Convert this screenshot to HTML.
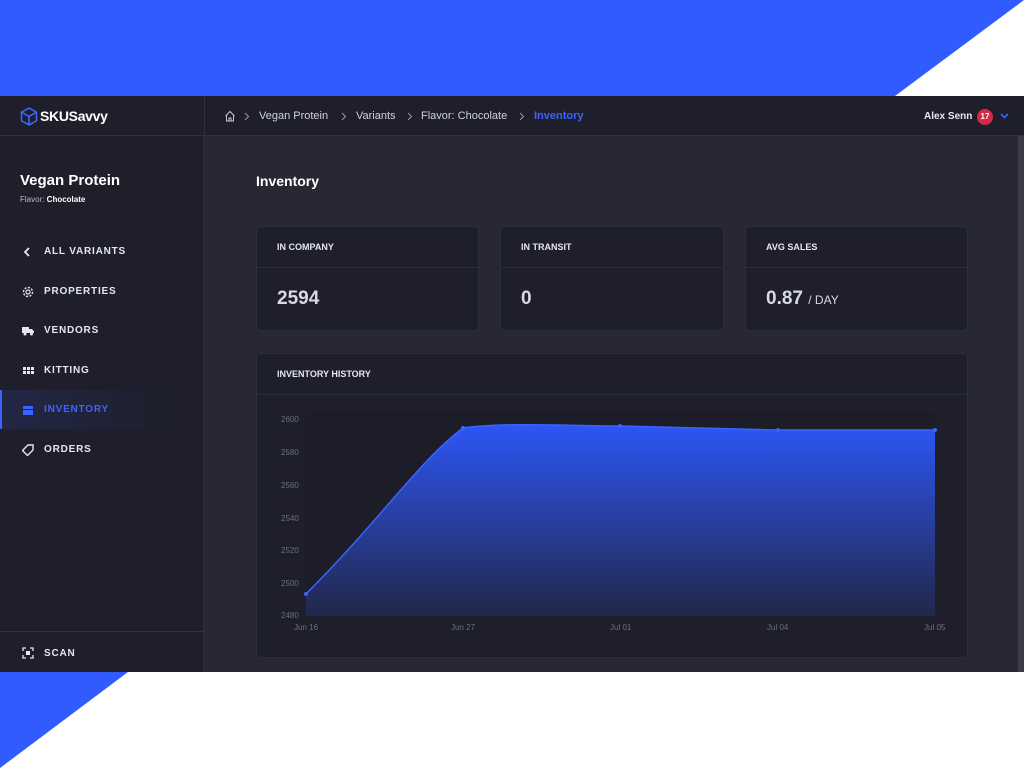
<!DOCTYPE html>
<html><head><style>
*{margin:0;padding:0;box-sizing:border-box}
body{width:1024px;height:768px;background:#fff;position:relative;overflow:hidden;font-family:"Liberation Sans",sans-serif}
.abs{position:absolute}
.app{position:absolute;left:0;top:96px;width:1024px;height:576px;background:#272834}
.top{position:absolute;left:0;top:0;width:1024px;height:40px;background:#1e1f2b;border-bottom:1px solid #30313d}
.side{position:absolute;left:0;top:40px;width:204px;height:536px;background:#1e1f2b;border-right:1px solid #30313d}
.nav{position:absolute;left:44px;font-size:10px;font-weight:bold;color:#e6e7ee;letter-spacing:.8px}
.ico{position:absolute;left:22px;width:12px;height:10px}
.card{position:absolute;background:#1e1f2b;border:1px solid #2c2d3a;border-radius:4px}
.ch{height:41px;border-bottom:1px solid #2c2d3a;padding:15px 20px 0;font-size:9px;font-weight:bold;color:#e6e7ee}
.val{padding:20px 20px;font-size:19px;font-weight:bold;color:#d8d9e2}
.bc{position:absolute;top:14px;font-size:11px;color:#d0d1da}
.sep{position:absolute;top:16px}
.ax{position:absolute;font-size:8px;color:#6e6f7c}
</style></head><body>
<div class="abs" style="left:0;top:0;width:1024px;height:96px;background:#2f5bff"></div>
<svg class="abs" style="left:0;top:0" width="1024" height="768"><polygon points="895,96 1024,0 1024,96" fill="#fff"/><polygon points="0,672 128,672 0,768" fill="#2f5bff"/></svg>
<div class="app">
<div class="top">
 <svg class="abs" style="left:20px;top:11px" width="18" height="19" viewBox="0 0 18 19"><path d="M9 1L16.5 5.2V13.8L9 18 1.5 13.8V5.2Z M1.5 5.2L9 9.5 16.5 5.2 M9 9.5V18" fill="none" stroke="#3d63ff" stroke-width="1.6"/></svg>
 <div class="abs" style="left:40px;top:12px;font-size:14px;font-weight:bold;color:#fff;letter-spacing:-.3px">SKUSavvy</div>
 <div class="abs" style="left:204px;top:0;width:1px;height:40px;background:#30313d"></div>
 <svg class="abs" style="left:224px;top:14px" width="12" height="12" viewBox="0 0 12 12"><path d="M1.5 6L6 1.5 10.5 6M2.5 5V11H9.5V5M5 11V8H7V11" fill="none" stroke="#c8c9d2" stroke-width="1"/></svg>
 <svg class="sep" style="left:244px" width="6" height="9"><path d="M1 1L4.5 4.5 1 8" fill="none" stroke="#999" stroke-width="1"/></svg>
 <div class="bc" style="left:259px">Vegan Protein</div>
 <svg class="sep" style="left:341px" width="6" height="9"><path d="M1 1L4.5 4.5 1 8" fill="none" stroke="#999" stroke-width="1"/></svg>
 <div class="bc" style="left:356px">Variants</div>
 <svg class="sep" style="left:407px" width="6" height="9"><path d="M1 1L4.5 4.5 1 8" fill="none" stroke="#999" stroke-width="1"/></svg>
 <div class="bc" style="left:421px">Flavor: Chocolate</div>
 <svg class="sep" style="left:519px" width="6" height="9"><path d="M1 1L4.5 4.5 1 8" fill="none" stroke="#999" stroke-width="1"/></svg>
 <div class="bc" style="left:534px;color:#3d63ff;font-weight:bold">Inventory</div>
 <div class="abs" style="left:924px;top:15px;font-size:10px;font-weight:bold;color:#e6e7ee">Alex Senn</div>
 <div class="abs" style="left:977px;top:13px;width:16px;height:16px;border-radius:8px;background:#d42a4a;color:#fff;font-size:8px;font-weight:bold;text-align:center;line-height:16px">17</div>
 <svg class="abs" style="left:1000px;top:17px" width="9" height="6"><path d="M1 1L4.5 4.5 8 1" fill="none" stroke="#3d63ff" stroke-width="1.6"/></svg>
</div>
<div class="abs" style="left:1018px;top:40px;width:6px;height:536px;background:#3a3b47"></div>
<div class="side">
 <div class="abs" style="left:20px;top:36px;font-size:15px;font-weight:bold;color:#fff">Vegan Protein</div>
 <div class="abs" style="left:20px;top:59px;font-size:8px;color:#bbb">Flavor: <b style="color:#fff">Chocolate</b></div>
 <svg class="ico" style="top:111px"><path d="M7 1L3 5 7 9" fill="none" stroke="#e6e7ee" stroke-width="1.8"/></svg>
 <div class="nav" style="top:110px">ALL VARIANTS</div>
 <svg class="ico" style="top:150px;height:12px" viewBox="0 0 12 12"><circle cx="6" cy="6" r="2" fill="none" stroke="#e6e7ee" stroke-width="1.2"/><circle cx="6" cy="6" r="4.5" fill="none" stroke="#e6e7ee" stroke-width="1.4" stroke-dasharray="2 1.5"/></svg>
 <div class="nav" style="top:150px">PROPERTIES</div>
 <svg class="ico" style="top:190px" viewBox="0 0 12 10"><path d="M0 1H7V7H0Z M7 3H10L12 5.5V7H7Z" fill="#e6e7ee"/><circle cx="3" cy="8" r="1.5" fill="#e6e7ee"/><circle cx="9.5" cy="8" r="1.5" fill="#e6e7ee"/></svg>
 <div class="nav" style="top:189px">VENDORS</div>
 <svg class="ico" style="top:230px" viewBox="0 0 12 10"><path d="M1 1h3v3H1zM5 1h3v3H5zM9 1h3v3H9zM1 5h3v3H1zM5 5h3v3H5zM9 5h3v3H9z" fill="#e6e7ee"/></svg>
 <div class="nav" style="top:229px">KITTING</div>
 <div class="abs" style="left:0;top:254px;width:170px;height:39px;background:linear-gradient(90deg,#222747,#1e1f2b)"></div>
 <div class="abs" style="left:0;top:254px;width:2px;height:39px;background:#3d63ff"></div>
 <svg class="ico" style="top:269px" viewBox="0 0 12 10"><path d="M1 1H11V4H1ZM1 5H11V10H1Z" fill="#3d63ff"/></svg>
 <div class="nav" style="top:268px;color:#3d63ff">INVENTORY</div>
 <svg class="ico" style="top:308px;height:12px" viewBox="0 0 12 12"><path d="M6 1H11V6L5.5 11.5 0.5 6.5Z" fill="none" stroke="#e6e7ee" stroke-width="1.4"/></svg>
 <div class="nav" style="top:308px">ORDERS</div>
 <div class="abs" style="left:0;top:495px;width:204px;height:1px;background:#30313d"></div>
 <svg class="ico" style="top:511px;height:12px" viewBox="0 0 12 12"><path d="M1 4V1H4M8 1H11V4M11 8V11H8M4 11H1V8" fill="none" stroke="#e6e7ee" stroke-width="1.3"/><rect x="4" y="4" width="4" height="4" fill="#e6e7ee"/></svg>
 <div class="nav" style="top:512px">SCAN</div>
</div>
<div class="abs" style="left:256px;top:77px;font-size:14px;font-weight:bold;color:#fff">Inventory</div>
<div class="card" style="left:256px;top:130px;width:223px;height:105px"><div class="ch">IN COMPANY</div><div class="val">2594</div></div>
<div class="card" style="left:500px;top:130px;width:224px;height:105px"><div class="ch">IN TRANSIT</div><div class="val">0</div></div>
<div class="card" style="left:745px;top:130px;width:223px;height:105px"><div class="ch">AVG SALES</div><div class="val">0.87 <span style="font-size:12px;font-weight:normal">/ DAY</span></div></div>
<div class="card" style="left:256px;top:257px;width:712px;height:305px"><div class="ch">INVENTORY HISTORY</div></div>
</div>
<svg class="abs" style="left:0;top:0" width="1024" height="768">
<defs><linearGradient id="g" x1="0" y1="0" x2="0" y2="1"><stop offset="0" stop-color="#2d56f5"/><stop offset="1" stop-color="#22274a"/></linearGradient></defs>
<rect x="306" y="412" width="629" height="204" fill="#1c1d28"/>
<path d="M306 594 C380 520 420 460 463 428 C500 422 580 426 620 426 L778 430 L935 430 L935 616 L306 616Z" fill="url(#g)"/>
<path d="M306 594 C380 520 420 460 463 428 C500 422 580 426 620 426 L778 430 L935 430" fill="none" stroke="#3a64ff" stroke-width="1.5"/>
<g fill="#3a64ff"><circle cx="306" cy="594" r="2"/><circle cx="463" cy="428" r="2"/><circle cx="620" cy="426" r="2"/><circle cx="778" cy="430" r="2"/><circle cx="935" cy="430" r="2"/></g>
</svg>
<div class="ax" style="left:281px;top:415px">2600</div>
<div class="ax" style="left:281px;top:448px">2580</div>
<div class="ax" style="left:281px;top:481px">2560</div>
<div class="ax" style="left:281px;top:514px">2540</div>
<div class="ax" style="left:281px;top:546px">2520</div>
<div class="ax" style="left:281px;top:579px">2500</div>
<div class="ax" style="left:281px;top:611px">2480</div>
<div class="ax" style="left:294px;top:623px">Jun 16</div>
<div class="ax" style="left:451px;top:623px">Jun 27</div>
<div class="ax" style="left:610px;top:623px">Jul 01</div>
<div class="ax" style="left:767px;top:623px">Jul 04</div>
<div class="ax" style="left:924px;top:623px">Jul 05</div>
</body></html>
